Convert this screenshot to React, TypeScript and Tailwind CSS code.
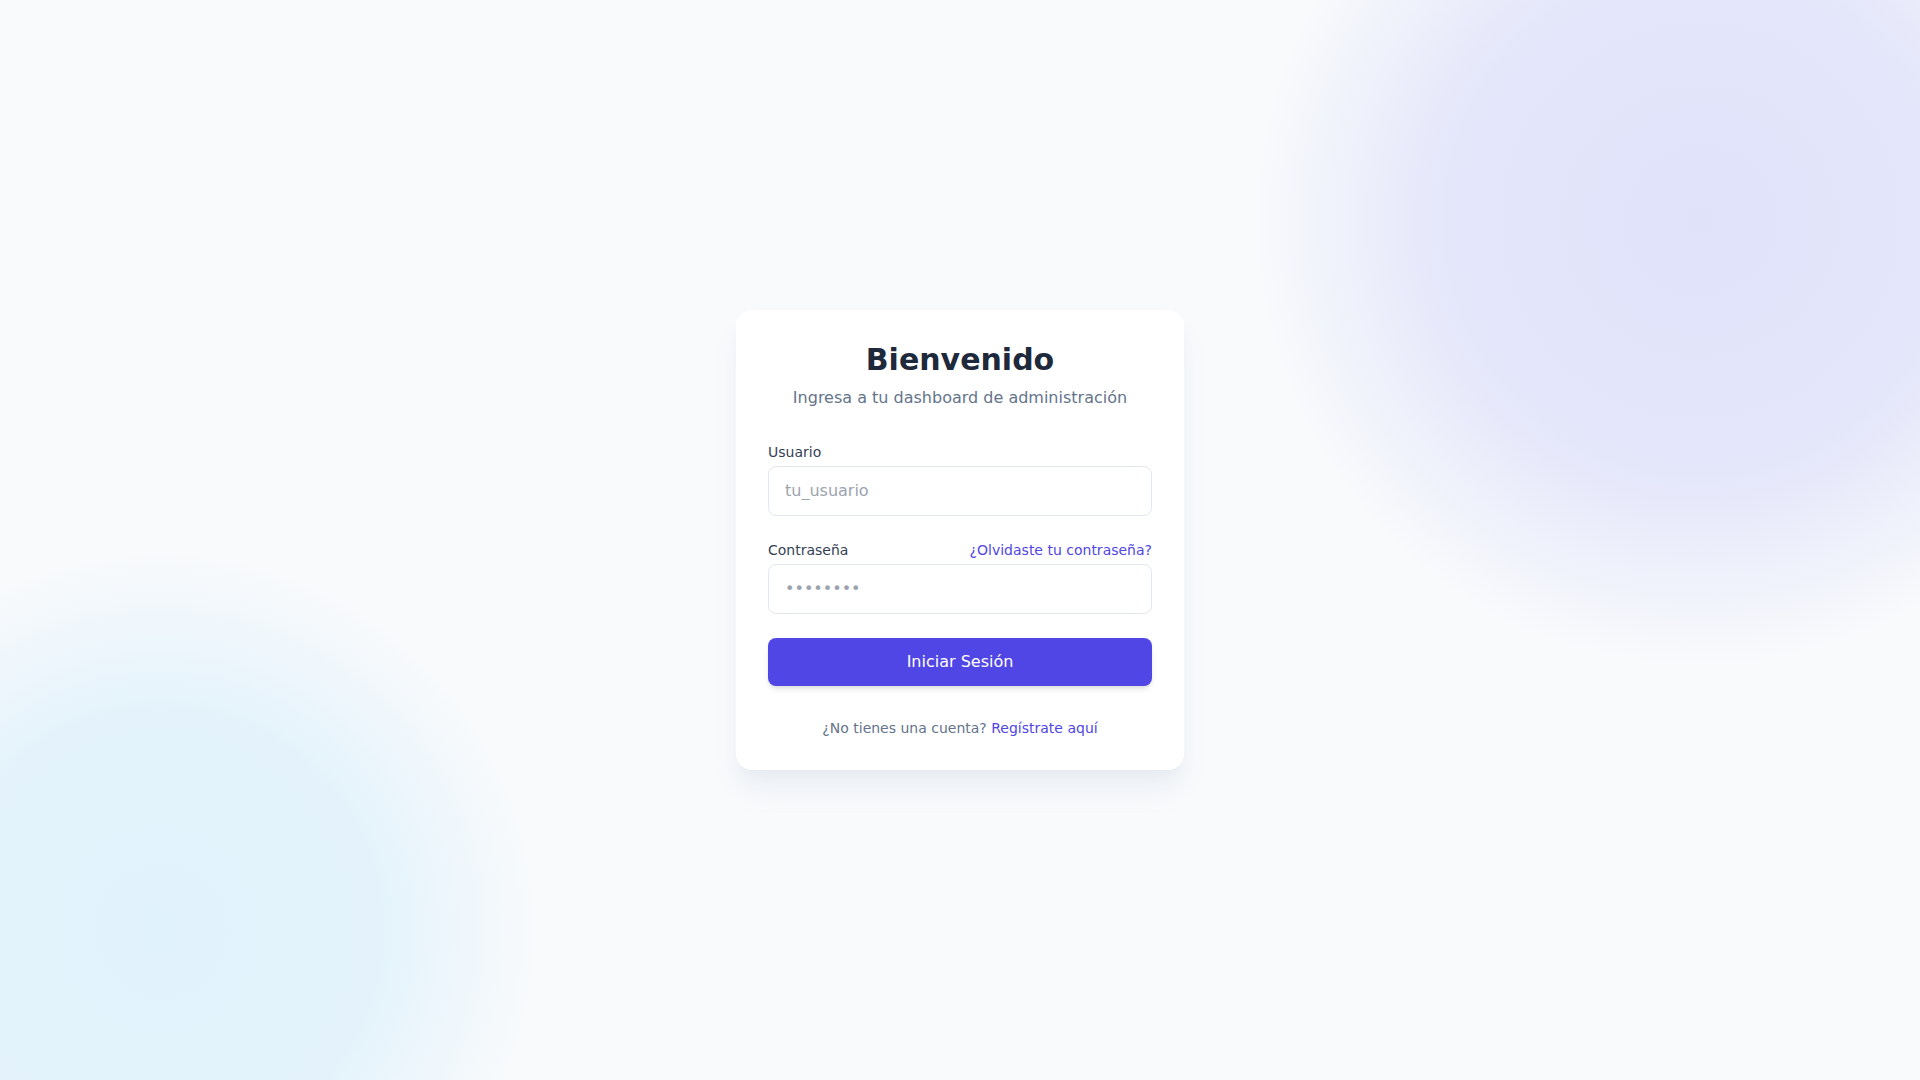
export default function App() {
    return (
        <main className="relative min-h-screen overflow-hidden bg-[#f8fafc] flex items-center justify-center font-['DejaVu_Sans',sans-serif]">
            {/* soft background blobs */}
            <div className="absolute -top-[230px] -right-[230px] w-[900px] h-[900px] rounded-full bg-[radial-gradient(circle,rgba(224,226,250,1)_0%,rgba(226,228,250,0.9)_40%,rgba(248,250,252,0)_70%)]" />
            <div className="absolute -bottom-[230px] -left-[220px] w-[760px] h-[760px] rounded-full bg-[radial-gradient(circle,rgba(224,242,252,1)_0%,rgba(225,242,251,0.9)_40%,rgba(248,250,252,0)_70%)]" />

            <section className="relative w-[448px] bg-white rounded-2xl shadow-xl shadow-slate-200/70 p-8">
                <div className="text-center">
                    <h1 className="text-3xl font-bold text-[#1e293b]">Bienvenido</h1>
                    <p className="mt-2 text-base text-[#64748b]">Ingresa a tu dashboard de administración</p>
                </div>
                <form className="mt-8 space-y-6" onSubmit={e => e.preventDefault()}>
                    <div>
                        <label className="block mb-1 text-sm text-[#334155]">Usuario</label>
                        <input
                            className="w-full px-4 py-3 text-base border border-[#e2e8f0] rounded-lg placeholder:text-[#9ca3af] outline-none"
                            placeholder="tu_usuario"
                        />
                    </div>
                    <div>
                        <div className="flex items-center justify-between mb-1">
                            <label className="text-sm text-[#334155]">Contraseña</label>
                            <a href="#" className="text-sm text-[#4f46e5]">¿Olvidaste tu contraseña?</a>
                        </div>
                        <input
                            type="password"
                            className="w-full px-4 py-3 text-base border border-[#e2e8f0] rounded-lg placeholder:text-[#9ca3af] outline-none"
                            placeholder="••••••••"
                        />
                    </div>
                    <button type="submit" className="w-full py-3 text-base text-white bg-[#4f46e5] rounded-lg shadow-md">Iniciar Sesión</button>
                </form>
                <p className="mt-8 text-center text-sm text-[#64748b]">
                    ¿No tienes una cuenta? <a href="#" className="text-[#4f46e5]">Regístrate aquí</a>
                </p>
            </section>
        </main>
    );
}
